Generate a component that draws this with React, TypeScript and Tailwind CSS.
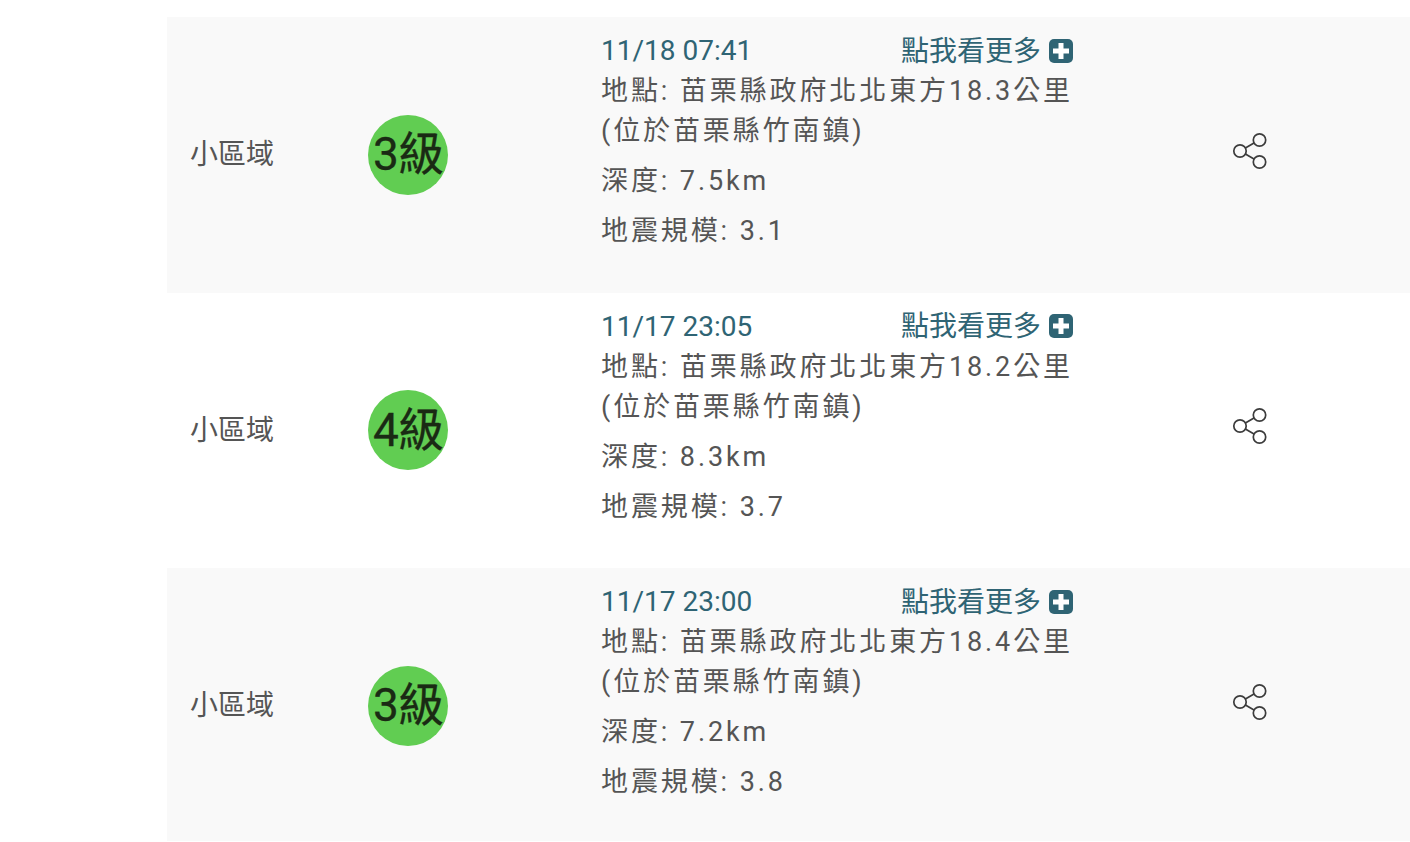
const rows = [
  { time: "11/18 07:41", level: "3級", dist: "18.3", depth: "7.5km", mag: "3.1", bg: "bg-[#f9f9f9]" },
  { time: "11/17 23:05", level: "4級", dist: "18.2", depth: "8.3km", mag: "3.7", bg: "bg-white" },
  { time: "11/17 23:00", level: "3級", dist: "18.4", depth: "7.2km", mag: "3.8", bg: "bg-[#f9f9f9]" },
];

function ShareIcon() {
  return (
    <svg width="36" height="38" viewBox="0 0 36 38" fill="none" stroke="#3c3c3c" strokeWidth="1.7">
      <circle cx="8" cy="19" r="6.2" />
      <circle cx="27.5" cy="8" r="6.2" />
      <circle cx="27.5" cy="30" r="6.2" />
      <path d="M13.4 16 22 11M13.4 22 22 27" />
    </svg>
  );
}

function PlusIcon() {
  return (
    <svg width="24" height="24" viewBox="0 0 24 24">
      <rect width="24" height="24" rx="5" fill="#2f6474" />
      <path d="M12 4v16M4 12h16" stroke="#fff" strokeWidth="5" />
    </svg>
  );
}

export default function App() {
  return (
    <main className="h-[842px] overflow-hidden bg-white pt-[17px]">
      <div
        className="ml-[167px] h-[824px] overflow-hidden"
        style={{ fontFamily: 'Roboto, "Noto Sans CJK TC", sans-serif' }}
      >
        {rows.map((r) => (
          <div key={r.time} className={`flex h-[275.5px] items-center ${r.bg}`}>
            <div className="mt-[1px] w-[201px] shrink-0 pl-[23px] text-[28px] text-[#555]">小區域</div>
            <div className="w-[233px] shrink-0">
              <div className="flex h-20 w-20 items-center justify-center rounded-full bg-[#61cd52] text-[46px] whitespace-nowrap tracking-[-1px] text-[#1a2a14] [-webkit-text-stroke:0.3px_#1a2a14]">
                {r.level}
              </div>
            </div>
            <div className="w-[472px] shrink-0 self-start pt-[14px] text-[27px] tracking-[2.9px] text-[#555]">
              <div className="flex h-10 items-center justify-between tracking-normal text-[#2f6474]">
                <span className="text-[28px]">{r.time}</span>
                <span className="flex items-center gap-[8px] text-[28px]">
                  <span className="mt-[1px]">點我看更多</span>
                  <span className="-mt-[1px]">
                    <PlusIcon />
                  </span>
                </span>
              </div>
              <p className="leading-10">地點: 苗栗縣政府北北東方{r.dist}公里</p>
              <p className="leading-10">(位於苗栗縣竹南鎮)</p>
              <p className="mt-[10px] leading-10">深度: {r.depth}</p>
              <p className="mt-[10px] leading-10">地震規模: {r.mag}</p>
            </div>
            <div className="ml-[159px] -mt-[8px]">
              <ShareIcon />
            </div>
          </div>
        ))}
      </div>
    </main>
  );
}
